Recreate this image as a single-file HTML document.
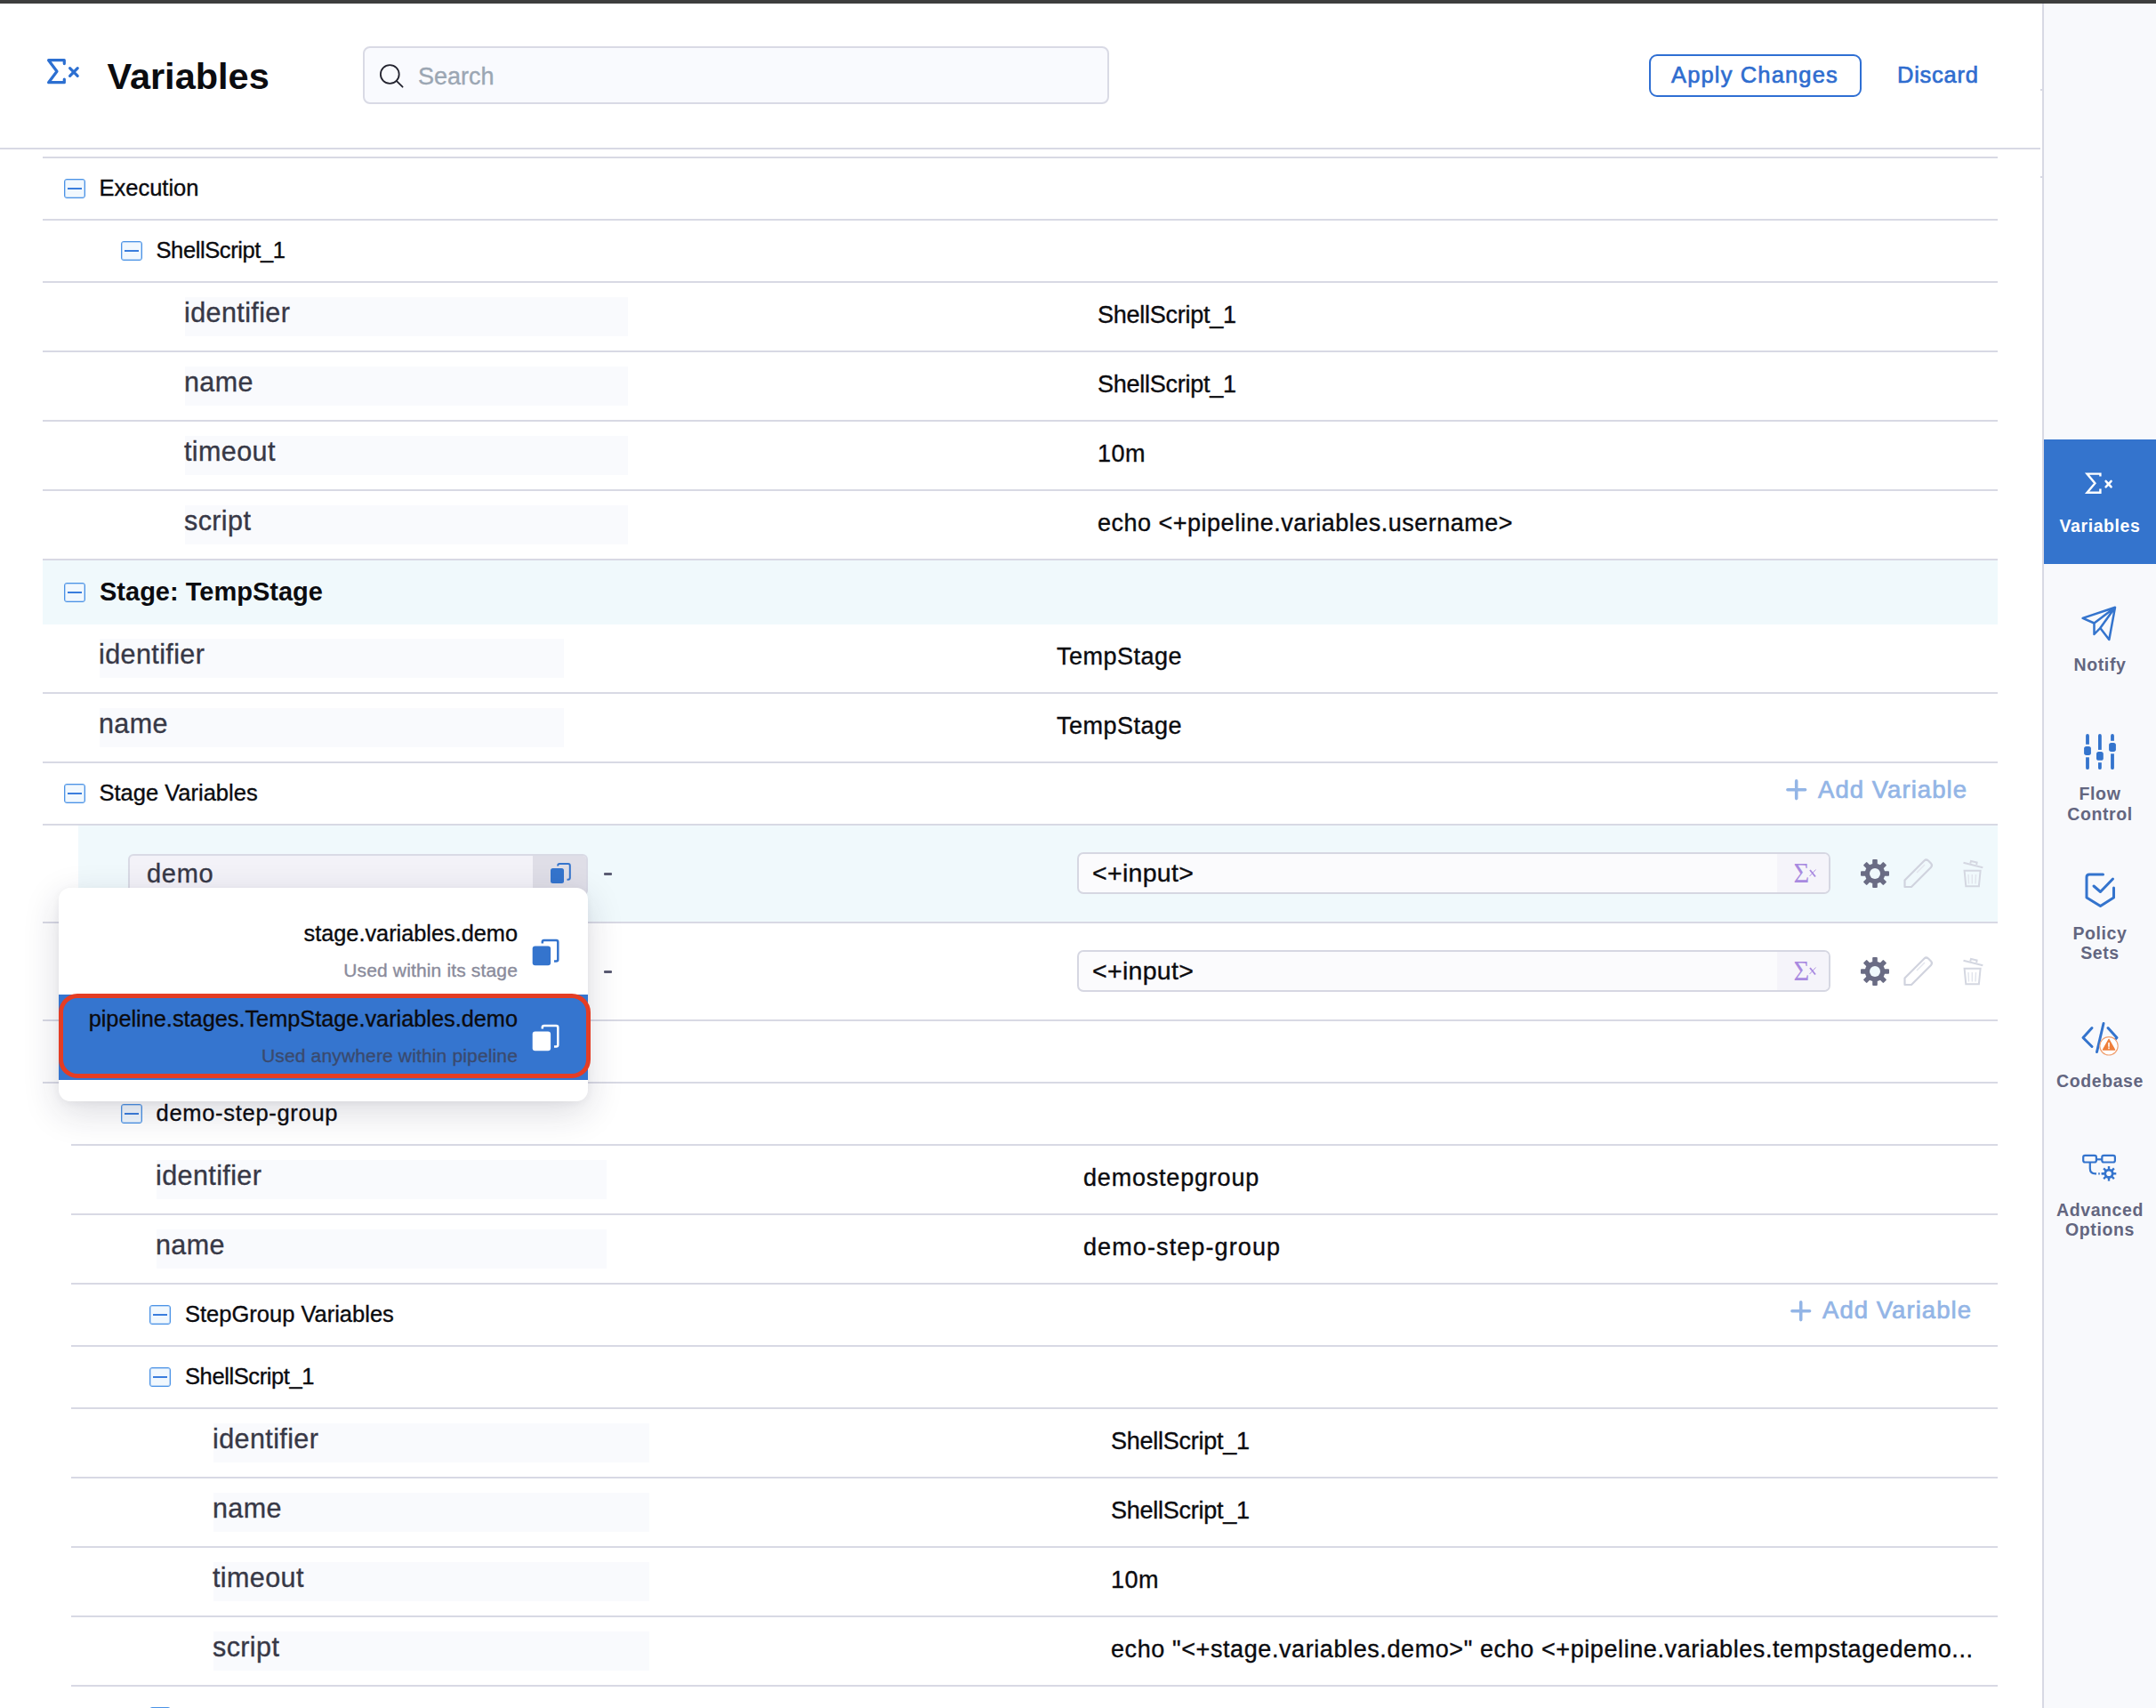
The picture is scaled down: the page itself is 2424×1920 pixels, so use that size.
<!DOCTYPE html>
<html><head><meta charset="utf-8"><title>Variables</title>
<style>
html,body{margin:0;padding:0}
body{width:2424px;height:1920px;position:relative;overflow:hidden;background:#fff;font-family:"Liberation Sans",sans-serif}
body div{position:absolute}
.t{white-space:nowrap;line-height:1}
.r{-webkit-text-stroke:0.35px currentColor}
.mb{width:24px;height:22px;box-sizing:border-box;border:1px solid #4b93e6;box-shadow:inset 0 0 0 1px rgba(75,147,230,0.35);border-radius:3px;background:#f1f8fe}
.mb i{position:absolute;left:3px;top:9px;width:16px;height:2.4px;background:#3a7ddd}
svg{position:absolute}
</style></head><body>
<div style="left:0px;top:0px;width:2424px;height:4px;background:#3d3e3e"></div>
<svg style="position:absolute;left:50px;top:62px" width="44" height="38" viewBox="0 0 44 38">
<path d="M22.3 9.6 V5.7 H4.6 L14 18.2 L4.6 30.7 H22.3 V27" fill="none" stroke="#2c6fd1" stroke-width="3.2" stroke-linejoin="round" stroke-linecap="round"/>
<path d="M28.6 14.6 L37.2 23.3 M37.2 14.6 L28.6 23.3" stroke="#2c6fd1" stroke-width="3.2" stroke-linecap="round"/>
</svg>
<div class="t" style="left:120.5px;top:64.9px;font-size:41.5px;color:#0b0c10;font-weight:700;">Variables</div>
<div style="left:408px;top:52px;width:839px;height:65px;background:#f9fafe;border:2px solid #d9dae5;border-radius:8px;box-sizing:border-box"></div>
<svg style="position:absolute;left:424px;top:70px" width="32" height="32" viewBox="0 0 32 32">
<circle cx="14.3" cy="13.5" r="10.4" fill="none" stroke="#22222e" stroke-width="1.8"/>
<path d="M21.7 20.9 L28.6 27.7" stroke="#22222e" stroke-width="1.8" stroke-linecap="round"/></svg>
<div class="t r" style="left:470px;top:72.6px;font-size:27px;color:#9ba6b3;font-weight:400;">Search</div>
<div style="left:1854px;top:61px;width:239px;height:48px;border:2px solid #2f6fd3;border-radius:9px;box-sizing:border-box"></div>
<div class="t" style="left:1879px;top:72.4px;font-size:25.5px;color:#2f6dcf;font-weight:500;letter-spacing:1.15px;-webkit-text-stroke:0.65px currentColor">Apply Changes</div>
<div class="t" style="left:2133px;top:72.4px;font-size:25.5px;color:#2f6dcf;font-weight:500;letter-spacing:0.75px;-webkit-text-stroke:0.65px currentColor">Discard</div>
<div style="left:0px;top:166px;width:2294px;height:2px;background:#d8d9e4"></div>
<div style="left:2294px;top:100px;width:2px;height:2px;background:#d8d9e4"></div>
<div style="left:2294px;top:198px;width:2px;height:2px;background:#d8d9e4"></div>
<div style="left:2296px;top:4px;width:2px;height:1916px;background:#d8d9e4"></div>
<div style="left:2298px;top:4px;width:126px;height:1916px;background:#f8f9fc"></div>
<div style="left:2298px;top:494px;width:126px;height:140px;background:#3474cd"></div>
<svg style="position:absolute;left:2340px;top:527px" width="40" height="32" viewBox="0 0 40 32">
<path d="M21.4 8.6 V5.6 H6.5 L15.4 16.2 L6.5 26.8 H21.4 V22.6" fill="none" stroke="#fff" stroke-width="2.4" stroke-linecap="butt"/>
<path d="M27.6 13.8 L33.6 20.4 M33.6 13.8 L27.6 20.4" stroke="#fff" stroke-width="2.5" stroke-linecap="round"/></svg>
<div class="t" style="left:2261px;width:200px;text-align:center;top:582.3px;font-size:19.5px;font-weight:700;color:#fff;letter-spacing:0.6px">Variables</div>
<svg style="position:absolute;left:2339px;top:680px" width="42" height="42" viewBox="0 0 42 42">
<path d="M2.6 14.9 L39 2.8 L32.3 39 L22.3 26 L15.5 33 L15.5 20.5 Z M15.5 20.5 L39 2.8 M22.3 26 L39 2.8" fill="none" stroke="#3474cd" stroke-width="2.5" stroke-linejoin="round" stroke-linecap="round"/></svg>
<div class="t" style="left:2261px;width:200px;text-align:center;top:738.3px;font-size:19.5px;font-weight:700;color:#636680;letter-spacing:0.6px">Notify</div>
<svg style="position:absolute;left:2338px;top:822px" width="46" height="46" viewBox="0 0 46 46">
<g stroke="#3474cd" stroke-width="3.8" stroke-linecap="round" fill="none">
<path d="M9 4.9 V41.2 M22.9 4.9 V41.2 M37 4.9 V41.2"/></g>
<g fill="#f8f9fc"><rect x="5" y="14.8" width="8" height="14.5"/><rect x="19" y="20.9" width="8" height="14.3"/><rect x="33" y="10.8" width="8" height="14.5"/></g>
<g fill="#3474cd"><rect x="5.1" y="16.9" width="7.8" height="10" rx="2.6"/><rect x="19" y="23" width="7.8" height="9.8" rx="2.6"/><rect x="33.1" y="13" width="7.8" height="9.9" rx="2.6"/></g></svg>
<div class="t" style="left:2261px;width:200px;text-align:center;top:883.3px;font-size:19.5px;font-weight:700;color:#636680;letter-spacing:0.6px">Flow</div>
<div class="t" style="left:2261px;width:200px;text-align:center;top:906.3px;font-size:19.5px;font-weight:700;color:#636680;letter-spacing:0.6px">Control</div>
<svg style="position:absolute;left:2342px;top:979px" width="38" height="44" viewBox="0 0 38 44">
<path d="M22.5 4 H7 Q4 4 4 7 V30 L19.5 39.5 L34.5 30 V19" fill="none" stroke="#3474cd" stroke-width="3" stroke-linecap="round" stroke-linejoin="round"/>
<path d="M12 17 L19.5 23.5 L33.5 9" fill="none" stroke="#3474cd" stroke-width="3" stroke-linecap="round" stroke-linejoin="round"/></svg>
<div class="t" style="left:2261px;width:200px;text-align:center;top:1039.9px;font-size:19.5px;font-weight:700;color:#636680;letter-spacing:0.6px">Policy</div>
<div class="t" style="left:2261px;width:200px;text-align:center;top:1062.3px;font-size:19.5px;font-weight:700;color:#636680;letter-spacing:0.6px">Sets</div>
<svg style="position:absolute;left:2338px;top:1146px" width="50" height="44" viewBox="0 0 50 44">
<path d="M14 9.5 L4 20.5 L14 30.5 M32 9.5 L42 20.5 L32 30.5" fill="none" stroke="#3474cd" stroke-width="3" stroke-linecap="round" stroke-linejoin="round"/>
<path d="M27 4.5 L19.5 36.5" stroke="#3474cd" stroke-width="3" stroke-linecap="round"/>
<circle cx="33" cy="29.8" r="10.2" fill="#fff" stroke="#f0a070" stroke-width="1.1"/>
<path d="M33 22.5 L39.5 34 H26.5 Z" fill="#ef7f3a" stroke="#ef7f3a" stroke-width="1.5" stroke-linejoin="round"/>
<path d="M33 26.5 V30.2 M33 32 V32.6" stroke="#fff" stroke-width="1.6" stroke-linecap="round"/></svg>
<div class="t" style="left:2261px;width:200px;text-align:center;top:1205.9px;font-size:19.5px;font-weight:700;color:#636680;letter-spacing:0.6px">Codebase</div>
<svg style="position:absolute;left:2338px;top:1294px" width="46" height="40" viewBox="0 0 46 40">
<g fill="none" stroke="#3474cd" stroke-width="2.2">
<rect x="4.2" y="4.9" width="14.7" height="7.6" rx="2"/><rect x="25.3" y="4.9" width="14.6" height="7.6" rx="2"/>
<path d="M18.9 9.3 H25.3"/><path d="M11.8 12.5 V19.5 Q11.8 25.3 18 25.3 H19"/><path d="M21.2 25.3 H22.8"/><path d="M24.8 25.3 H27.5"/></g>
<g transform="translate(33 25.3)" fill="#3474cd"><rect x="-1.2" y="-8.3" width="2.4" height="4.5" transform="rotate(0)"/><rect x="-1.2" y="-8.3" width="2.4" height="4.5" transform="rotate(45)"/><rect x="-1.2" y="-8.3" width="2.4" height="4.5" transform="rotate(90)"/><rect x="-1.2" y="-8.3" width="2.4" height="4.5" transform="rotate(135)"/><rect x="-1.2" y="-8.3" width="2.4" height="4.5" transform="rotate(180)"/><rect x="-1.2" y="-8.3" width="2.4" height="4.5" transform="rotate(225)"/><rect x="-1.2" y="-8.3" width="2.4" height="4.5" transform="rotate(270)"/><rect x="-1.2" y="-8.3" width="2.4" height="4.5" transform="rotate(315)"/><circle r="5.6"/><circle r="2.8" fill="#f8f9fc"/></g></svg>
<div class="t" style="left:2261px;width:200px;text-align:center;top:1350.8px;font-size:19.5px;font-weight:700;color:#636680;letter-spacing:0.6px">Advanced</div>
<div class="t" style="left:2261px;width:200px;text-align:center;top:1373.3px;font-size:19.5px;font-weight:700;color:#636680;letter-spacing:0.6px">Options</div>
<div style="left:48px;top:176px;width:2198px;height:2px;background:#d8d9e4"></div>
<div class="mb" style="left:72px;top:201px"><i></i></div>
<div class="t r" style="left:111.5px;top:199.4px;font-size:25.5px;color:#0b0b0f;font-weight:400;letter-spacing:0px">Execution</div>
<div style="left:48px;top:246px;width:2198px;height:2px;background:#d8d9e4"></div>
<div class="mb" style="left:136px;top:271px"><i></i></div>
<div class="t r" style="left:175.5px;top:269.4px;font-size:25.5px;color:#0b0b0f;font-weight:400;letter-spacing:-0.4px">ShellScript_1</div>
<div style="left:48px;top:316px;width:2198px;height:2px;background:#d8d9e4"></div>
<div style="left:208px;top:334px;width:498px;height:44px;background:#f9fafd"></div>
<div class="t r" style="left:207px;top:336.2px;font-size:30.5px;color:#373846;font-weight:400;letter-spacing:0.4px">identifier</div>
<div class="t r" style="left:1234px;top:340.6px;font-size:27px;color:#0b0b0f;font-weight:400;letter-spacing:-0.25px">ShellScript_1</div>
<div style="left:48px;top:394px;width:2198px;height:2px;background:#d8d9e4"></div>
<div style="left:208px;top:412px;width:498px;height:44px;background:#f9fafd"></div>
<div class="t r" style="left:207px;top:414.2px;font-size:30.5px;color:#373846;font-weight:400;letter-spacing:0.4px">name</div>
<div class="t r" style="left:1234px;top:418.6px;font-size:27px;color:#0b0b0f;font-weight:400;letter-spacing:-0.25px">ShellScript_1</div>
<div style="left:48px;top:472px;width:2198px;height:2px;background:#d8d9e4"></div>
<div style="left:208px;top:490px;width:498px;height:44px;background:#f9fafd"></div>
<div class="t r" style="left:207px;top:492.2px;font-size:30.5px;color:#373846;font-weight:400;letter-spacing:0.4px">timeout</div>
<div class="t r" style="left:1234px;top:496.6px;font-size:27px;color:#0b0b0f;font-weight:400;letter-spacing:0.5px">10m</div>
<div style="left:48px;top:550px;width:2198px;height:2px;background:#d8d9e4"></div>
<div style="left:208px;top:568px;width:498px;height:44px;background:#f9fafd"></div>
<div class="t r" style="left:207px;top:570.2px;font-size:30.5px;color:#373846;font-weight:400;letter-spacing:0.4px">script</div>
<div class="t r" style="left:1234px;top:574.6px;font-size:27px;color:#0b0b0f;font-weight:400;letter-spacing:0.5px">echo &lt;+pipeline.variables.username&gt;</div>
<div style="left:48px;top:628px;width:2198px;height:2px;background:#d8d9e4"></div>
<div style="left:48px;top:630px;width:2198px;height:72px;background:#f0f9fc"></div>
<div class="mb" style="left:72px;top:655px"><i></i></div>
<div class="t" style="left:112px;top:651.2px;font-size:29px;color:#0b0b0f;font-weight:700;">Stage: TempStage</div>
<div style="left:112px;top:718px;width:522px;height:44px;background:#f9fafd"></div>
<div class="t r" style="left:111px;top:720.2px;font-size:30.5px;color:#373846;font-weight:400;letter-spacing:0.4px">identifier</div>
<div class="t r" style="left:1188px;top:724.6px;font-size:27px;color:#0b0b0f;font-weight:400;letter-spacing:0.5px">TempStage</div>
<div style="left:48px;top:778px;width:2198px;height:2px;background:#d8d9e4"></div>
<div style="left:112px;top:796px;width:522px;height:44px;background:#f9fafd"></div>
<div class="t r" style="left:111px;top:798.2px;font-size:30.5px;color:#373846;font-weight:400;letter-spacing:0.4px">name</div>
<div class="t r" style="left:1188px;top:802.6px;font-size:27px;color:#0b0b0f;font-weight:400;letter-spacing:0.5px">TempStage</div>
<div style="left:48px;top:856px;width:2198px;height:2px;background:#d8d9e4"></div>
<div class="mb" style="left:72px;top:881px"><i></i></div>
<div class="t r" style="left:111.5px;top:879.4px;font-size:25.5px;color:#0b0b0f;font-weight:400;letter-spacing:0px">Stage Variables</div>
<svg style="position:absolute;left:2008px;top:876px" width="26" height="26" viewBox="0 0 26 26"><path d="M11.7 1.9 V21.6 M1.9 11.7 H21.6" stroke="#93b5e6" stroke-width="3.6" stroke-linecap="round"/></svg>
<div class="t" style="left:2044px;top:873.7px;font-size:27.5px;color:#93b5e6;font-weight:500;letter-spacing:1.05px;-webkit-text-stroke:0.7px currentColor">Add Variable</div>
<div style="left:48px;top:926px;width:2198px;height:2px;background:#d8d9e4"></div>
<div style="left:88px;top:928px;width:2158px;height:108px;background:#f0f9fc"></div>
<div style="left:48px;top:1036px;width:2198px;height:2px;background:#d8d9e4"></div>
<div style="left:144px;top:960px;width:517px;height:47px;border:2px solid #d9dae5;border-radius:6px;box-sizing:border-box;background:#f3f2f8;overflow:hidden"><div style="left:453px;top:0;width:62px;height:43px;background:#dfdee7"></div></div>
<svg style="position:absolute;left:617px;top:969px" width="26" height="26" viewBox="0 0 26 26"><path d="M10.2 4.5 V4 Q10.2 2 12.2 2 H21.8 Q23.8 2 23.8 4 V17.8 Q23.8 19.8 21.8 19.8 H20.5" fill="none" stroke="#3474cd" stroke-width="2"/><rect x="2" y="7" width="15" height="17" rx="2.5" fill="#3474cd"/></svg>
<div class="t r" style="left:165px;top:967.9px;font-size:29px;color:#373846;font-weight:400;letter-spacing:0.7px">demo</div>
<div style="left:679px;top:981px;width:9px;height:3px;background:#5b5c73;border-radius:1px"></div>
<div style="left:1211px;top:958px;width:847px;height:47px;border:2px solid #d6d7e2;border-radius:7px;box-sizing:border-box;background:#fbfbfd;overflow:hidden"><div style="left:785px;top:0;width:60px;height:43px;background:#f5f4fa"></div></div>
<div class="t r" style="left:1228px;top:966.9px;font-size:28.5px;color:#0b0b0f;font-weight:400;letter-spacing:0.3px">&lt;+input&gt;</div>
<div class="t" style="left:2016.5px;top:966.5px;font-family:'Liberation Serif',serif;font-size:30.5px;line-height:30.5px;color:#a98ae0">&#931;</div>
<svg style="position:absolute;left:2032px;top:975px" width="12" height="12" viewBox="0 0 12 12"><path d="M3 3 L9 10.5" stroke="#a98ae0" stroke-width="1.9"/><path d="M9.5 2.5 L2.5 10" stroke="#a98ae0" stroke-width="0.9"/></svg>
<svg style="position:absolute;left:2090px;top:964px" width="36" height="36" viewBox="-18 -18 36 36"><g fill="#6a6c84">
    <circle r="11.3"/><rect x="-2.8" y="-16" width="5.6" height="8" rx="1" transform="rotate(0)"/><rect x="-2.8" y="-16" width="5.6" height="8" rx="1" transform="rotate(45)"/><rect x="-2.8" y="-16" width="5.6" height="8" rx="1" transform="rotate(90)"/><rect x="-2.8" y="-16" width="5.6" height="8" rx="1" transform="rotate(135)"/><rect x="-2.8" y="-16" width="5.6" height="8" rx="1" transform="rotate(180)"/><rect x="-2.8" y="-16" width="5.6" height="8" rx="1" transform="rotate(225)"/><rect x="-2.8" y="-16" width="5.6" height="8" rx="1" transform="rotate(270)"/><rect x="-2.8" y="-16" width="5.6" height="8" rx="1" transform="rotate(315)"/></g>
    <circle r="6" fill="#f0f9fc" class="gh"/></svg>
<svg style="position:absolute;left:2138px;top:963px" width="38" height="38" viewBox="0 0 38 38"><path d="M3.5 26.5 L25.5 4.5 Q27.5 2.5 30 4.5 L33 7.5 Q35 9.5 33 12 L11 34 H3.5 Z" fill="none" stroke="#d0d3de" stroke-width="2.2" stroke-linejoin="round"/><path d="M17 18 L26 9" stroke="#e3e6ee" stroke-width="1.5"/></svg>
<svg style="position:absolute;left:2205px;top:965px" width="28" height="34" viewBox="0 0 28 34"><g fill="none" stroke="#d4d7e1" stroke-width="2"><path d="M2.5 4.8 L24.3 10.2"/><path d="M10.2 5.6 L11 3 L17.6 4.5 L17.2 7"/><path d="M3.6 13.8 H21.6 L19.9 31.2 H5.3 Z"/></g><path d="M8 18 L8.5 28.5 M12.3 18 V28.5 M16.5 18 L16 28.5" stroke="#e1e4ec" stroke-width="1.4"/></svg>
<div style="left:144px;top:1070px;width:517px;height:47px;border:2px solid #d9dae5;border-radius:6px;box-sizing:border-box;background:#f3f2f8;overflow:hidden"><div style="left:453px;top:0;width:62px;height:43px;background:#dfdee7"></div></div>
<svg style="position:absolute;left:617px;top:1079px" width="26" height="26" viewBox="0 0 26 26"><path d="M10.2 4.5 V4 Q10.2 2 12.2 2 H21.8 Q23.8 2 23.8 4 V17.8 Q23.8 19.8 21.8 19.8 H20.5" fill="none" stroke="#3474cd" stroke-width="2"/><rect x="2" y="7" width="15" height="17" rx="2.5" fill="#3474cd"/></svg>
<div class="t r" style="left:165px;top:1077.9px;font-size:29px;color:#373846;font-weight:400;letter-spacing:0.7px">demo</div>
<div style="left:679px;top:1091px;width:9px;height:3px;background:#5b5c73;border-radius:1px"></div>
<div style="left:1211px;top:1068px;width:847px;height:47px;border:2px solid #d6d7e2;border-radius:7px;box-sizing:border-box;background:#fbfbfd;overflow:hidden"><div style="left:785px;top:0;width:60px;height:43px;background:#f5f4fa"></div></div>
<div class="t r" style="left:1228px;top:1076.9px;font-size:28.5px;color:#0b0b0f;font-weight:400;letter-spacing:0.3px">&lt;+input&gt;</div>
<div class="t" style="left:2016.5px;top:1076.5px;font-family:'Liberation Serif',serif;font-size:30.5px;line-height:30.5px;color:#a98ae0">&#931;</div>
<svg style="position:absolute;left:2032px;top:1085px" width="12" height="12" viewBox="0 0 12 12"><path d="M3 3 L9 10.5" stroke="#a98ae0" stroke-width="1.9"/><path d="M9.5 2.5 L2.5 10" stroke="#a98ae0" stroke-width="0.9"/></svg>
<svg style="position:absolute;left:2090px;top:1074px" width="36" height="36" viewBox="-18 -18 36 36"><g fill="#6a6c84">
    <circle r="11.3"/><rect x="-2.8" y="-16" width="5.6" height="8" rx="1" transform="rotate(0)"/><rect x="-2.8" y="-16" width="5.6" height="8" rx="1" transform="rotate(45)"/><rect x="-2.8" y="-16" width="5.6" height="8" rx="1" transform="rotate(90)"/><rect x="-2.8" y="-16" width="5.6" height="8" rx="1" transform="rotate(135)"/><rect x="-2.8" y="-16" width="5.6" height="8" rx="1" transform="rotate(180)"/><rect x="-2.8" y="-16" width="5.6" height="8" rx="1" transform="rotate(225)"/><rect x="-2.8" y="-16" width="5.6" height="8" rx="1" transform="rotate(270)"/><rect x="-2.8" y="-16" width="5.6" height="8" rx="1" transform="rotate(315)"/></g>
    <circle r="6" fill="#f0f9fc" class="gh"/></svg>
<svg style="position:absolute;left:2138px;top:1073px" width="38" height="38" viewBox="0 0 38 38"><path d="M3.5 26.5 L25.5 4.5 Q27.5 2.5 30 4.5 L33 7.5 Q35 9.5 33 12 L11 34 H3.5 Z" fill="none" stroke="#d0d3de" stroke-width="2.2" stroke-linejoin="round"/><path d="M17 18 L26 9" stroke="#e3e6ee" stroke-width="1.5"/></svg>
<svg style="position:absolute;left:2205px;top:1075px" width="28" height="34" viewBox="0 0 28 34"><g fill="none" stroke="#d4d7e1" stroke-width="2"><path d="M2.5 4.8 L24.3 10.2"/><path d="M10.2 5.6 L11 3 L17.6 4.5 L17.2 7"/><path d="M3.6 13.8 H21.6 L19.9 31.2 H5.3 Z"/></g><path d="M8 18 L8.5 28.5 M12.3 18 V28.5 M16.5 18 L16 28.5" stroke="#e1e4ec" stroke-width="1.4"/></svg>
<div style="left:48px;top:1146px;width:2198px;height:2px;background:#d8d9e4"></div>
<div style="left:48px;top:1216px;width:2198px;height:2px;background:#d8d9e4"></div>
<div style="left:48px;top:1216px;width:2198px;height:2px;background:#d8d9e4"></div>
<div class="mb" style="left:136px;top:1241px"><i></i></div>
<div class="t r" style="left:175.5px;top:1239.4px;font-size:25.5px;color:#0b0b0f;font-weight:400;letter-spacing:0.7px">demo-step-group</div>
<div style="left:80px;top:1286px;width:2166px;height:2px;background:#d8d9e4"></div>
<div style="left:176px;top:1304px;width:506px;height:44px;background:#f9fafd"></div>
<div class="t r" style="left:175px;top:1306.2px;font-size:30.5px;color:#373846;font-weight:400;letter-spacing:0.4px">identifier</div>
<div class="t r" style="left:1218px;top:1310.6px;font-size:27px;color:#0b0b0f;font-weight:400;letter-spacing:0.8px">demostepgroup</div>
<div style="left:80px;top:1364px;width:2166px;height:2px;background:#d8d9e4"></div>
<div style="left:176px;top:1382px;width:506px;height:44px;background:#f9fafd"></div>
<div class="t r" style="left:175px;top:1384.2px;font-size:30.5px;color:#373846;font-weight:400;letter-spacing:0.4px">name</div>
<div class="t r" style="left:1218px;top:1388.6px;font-size:27px;color:#0b0b0f;font-weight:400;letter-spacing:1.1px">demo-step-group</div>
<div style="left:80px;top:1442px;width:2166px;height:2px;background:#d8d9e4"></div>
<div class="mb" style="left:168px;top:1467px"><i></i></div>
<div class="t r" style="left:208px;top:1465.4px;font-size:25.5px;color:#0b0b0f;font-weight:400;">StepGroup Variables</div>
<svg style="position:absolute;left:2013px;top:1461.5px" width="26" height="26" viewBox="0 0 26 26"><path d="M11.7 1.9 V21.6 M1.9 11.7 H21.6" stroke="#93b5e6" stroke-width="3.6" stroke-linecap="round"/></svg>
<div class="t" style="left:2049px;top:1459.2px;font-size:27.5px;color:#93b5e6;font-weight:500;letter-spacing:1.05px;-webkit-text-stroke:0.7px currentColor">Add Variable</div>
<div style="left:80px;top:1512px;width:2166px;height:2px;background:#d8d9e4"></div>
<div class="mb" style="left:168px;top:1537px"><i></i></div>
<div class="t r" style="left:208px;top:1535.4px;font-size:25.5px;color:#0b0b0f;font-weight:400;letter-spacing:-0.4px">ShellScript_1</div>
<div style="left:80px;top:1582px;width:2166px;height:2px;background:#d8d9e4"></div>
<div style="left:240px;top:1600px;width:490px;height:44px;background:#f9fafd"></div>
<div class="t r" style="left:239px;top:1602.2px;font-size:30.5px;color:#373846;font-weight:400;letter-spacing:0.4px">identifier</div>
<div class="t r" style="left:1249px;top:1606.6px;font-size:27px;color:#0b0b0f;font-weight:400;letter-spacing:-0.25px">ShellScript_1</div>
<div style="left:80px;top:1660px;width:2166px;height:2px;background:#d8d9e4"></div>
<div style="left:240px;top:1678px;width:490px;height:44px;background:#f9fafd"></div>
<div class="t r" style="left:239px;top:1680.2px;font-size:30.5px;color:#373846;font-weight:400;letter-spacing:0.4px">name</div>
<div class="t r" style="left:1249px;top:1684.6px;font-size:27px;color:#0b0b0f;font-weight:400;letter-spacing:-0.25px">ShellScript_1</div>
<div style="left:80px;top:1738px;width:2166px;height:2px;background:#d8d9e4"></div>
<div style="left:240px;top:1756px;width:490px;height:44px;background:#f9fafd"></div>
<div class="t r" style="left:239px;top:1758.2px;font-size:30.5px;color:#373846;font-weight:400;letter-spacing:0.4px">timeout</div>
<div class="t r" style="left:1249px;top:1762.6px;font-size:27px;color:#0b0b0f;font-weight:400;letter-spacing:0.5px">10m</div>
<div style="left:80px;top:1816px;width:2166px;height:2px;background:#d8d9e4"></div>
<div style="left:240px;top:1834px;width:490px;height:44px;background:#f9fafd"></div>
<div class="t r" style="left:239px;top:1836.2px;font-size:30.5px;color:#373846;font-weight:400;letter-spacing:0.4px">script</div>
<div class="t r" style="left:1249px;top:1840.6px;font-size:27px;color:#0b0b0f;font-weight:400;letter-spacing:0.59px">echo "&lt;+stage.variables.demo&gt;" echo &lt;+pipeline.variables.tempstagedemo...</div>
<div style="left:80px;top:1894px;width:2166px;height:2px;background:#d8d9e4"></div>
<div class="mb" style="left:168px;top:1919px"><i></i></div>
<div style="left:66px;top:998px;width:595px;height:240px;background:#fff;border-radius:13px;box-shadow:0 12px 40px rgba(30,30,60,0.16),0 2px 8px rgba(30,30,60,0.05);overflow:hidden"><div style="left:0;top:120px;width:595px;height:96px;background:#3575cf"></div></div>
<div class="t r" style="right:1842px;top:1037.1px;font-size:25.3px;color:#0b0b0f;font-weight:400;">stage.variables.demo</div>
<div class="t r" style="right:1842px;top:1080.0px;font-size:21px;color:#8a8b9b;font-weight:400;letter-spacing:0.15px">Used within its stage</div>
<svg style="position:absolute;left:596px;top:1054px" width="34" height="34" viewBox="0 0 34 34"><path d="M13.8 6.5 V4.8 Q13.8 3 15.8 3 H29.3 Q31.3 3 31.3 5 V24.5 Q31.3 26.5 29.3 26.5 H27" fill="none" stroke="#3474cd" stroke-width="2.5"/><rect x="2.7" y="9.6" width="20.4" height="21.6" rx="3" fill="#3474cd"/></svg>
<div class="t r" style="right:1842px;top:1132.7px;font-size:25.3px;color:#0b0b0f;font-weight:400;">pipeline.stages.TempStage.variables.demo</div>
<div class="t r" style="right:1842px;top:1175.7px;font-size:21px;color:#3a4a6e;font-weight:400;letter-spacing:0.15px">Used anywhere within pipeline</div>
<svg style="position:absolute;left:596px;top:1150px" width="34" height="34" viewBox="0 0 34 34"><path d="M13.8 6.5 V4.8 Q13.8 3 15.8 3 H29.3 Q31.3 3 31.3 5 V24.5 Q31.3 26.5 29.3 26.5 H27" fill="none" stroke="#fff" stroke-width="2.5"/><rect x="2.7" y="9.6" width="20.4" height="21.6" rx="3" fill="#fff"/></svg>
<div style="left:66px;top:1117px;width:598px;height:95px;border:5px solid #e43d24;border-radius:21px;box-sizing:border-box"></div>
</body></html>
